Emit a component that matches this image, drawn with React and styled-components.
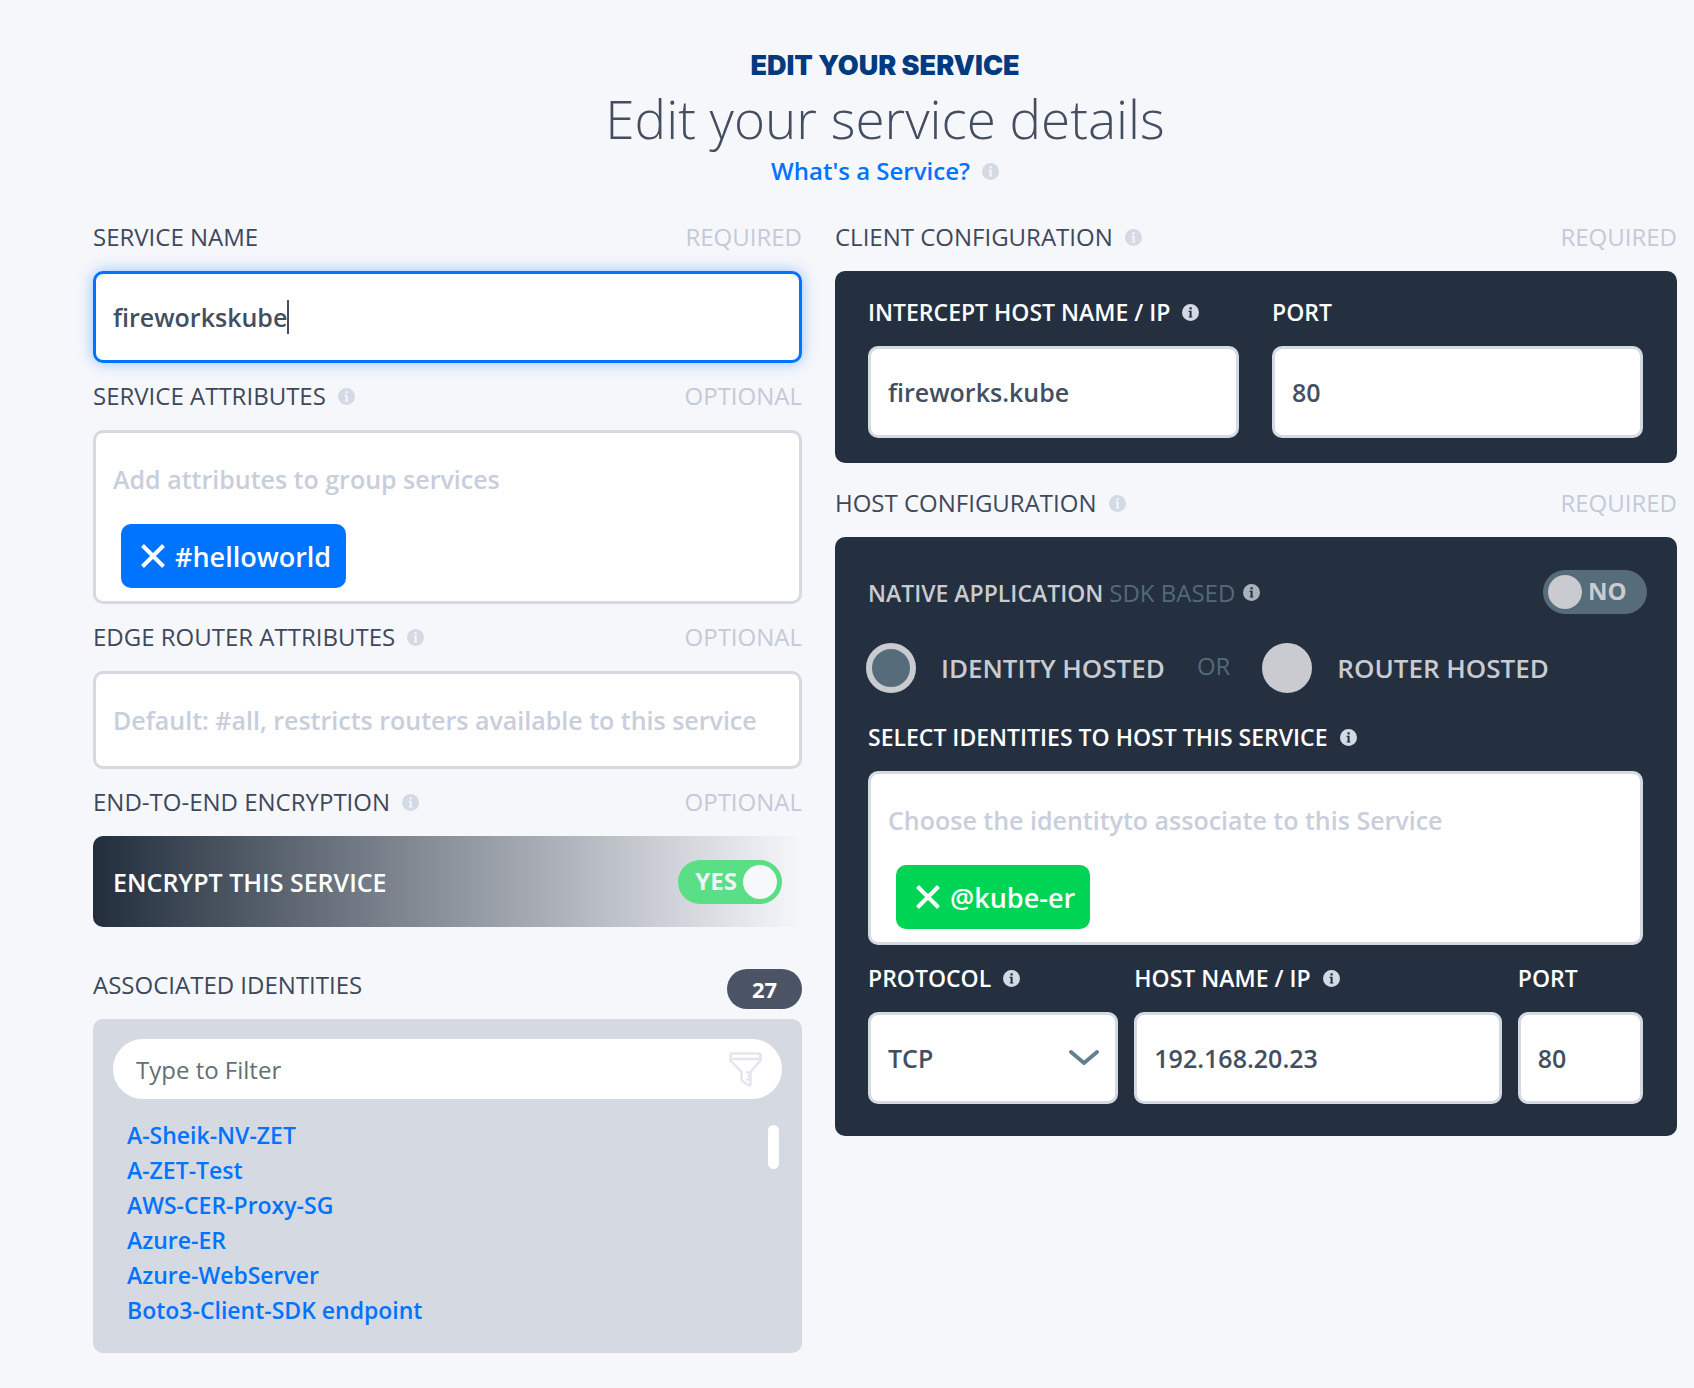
import React, { useState } from 'react'
import styled, { createGlobalStyle } from 'styled-components'

const identities = [
  'A-Sheik-NV-ZET',
  'A-ZET-Test',
  'AWS-CER-Proxy-SG',
  'Azure-ER',
  'Azure-WebServer',
  'Boto3-Client-SDK endpoint',
]

const CloseIcon = () => (
  <svg width="24" height="24" viewBox="0 0 24 24" fill="none" stroke="#ffffff" strokeWidth="4" aria-hidden="true">
    <path d="M1.5 1.5 22.5 22.5M22.5 1.5 1.5 22.5" />
  </svg>
)

const FunnelIcon = () => (
  <svg width="33" height="35" viewBox="0 0 33 35" fill="none" stroke="#e5e5ee" strokeWidth="2.5" strokeLinejoin="round" strokeLinecap="round" aria-hidden="true">
    <path d="M2.5 1.5h28a1 1 0 0 1 1 1v4.500h-30V2.500a1 1 0 0 1 1-1Z" />
    <path d="M1.500 8.500 12.500 20v8.500l7.500 5a1 1 0 0 0 1.500-1V20L31.500 8.500" />
    <path d="M18 20.500H21M19.500 24h1.500M18 27.500H21" />
  </svg>
)

const ChevronIcon = () => (
  <svg width="30" height="15" viewBox="0 0 30 15" fill="none" stroke="#64808f" strokeWidth="3.800" strokeLinecap="round" strokeLinejoin="round" aria-hidden="true">
    <path d="M2 2 15 13 28 2" />
  </svg>
)

const InfoIcon = ({ muted }) => (
  <InfoSvg $muted={muted} viewBox="0 0 17 17" aria-hidden="true">
    <path fillRule="evenodd" d="M8.500 0a8.500 8.500 0 1 1 0 17a8.500 8.500 0 0 1 0-17ZM7.500 3.300v2.200h2.200v-2.200ZM6.600 6.700v1.200h1v4.600h-.9v1h3.700v-1h-.8V6.700Z" />
  </InfoSvg>
)

function FieldLabel({ htmlFor, text, hint, note, dark }) {
  return (
    <LabelRow>
      <Label htmlFor={htmlFor} as={htmlFor ? 'label' : 'span'} $dark={dark}>{text}</Label>
      {hint && <InfoIcon />}
      {note && <Note>{note}</Note>}
    </LabelRow>
  )
}

function TagField({ id, placeholder, children }) {
  return (
    <TagBox>
      <TagInput id={id} type="text" placeholder={placeholder} />
      {children && <TagList>{children}</TagList>}
    </TagBox>
  )
}

function Toggle({ label, checked, onChange }) {
  return (
    <Switch type="button" role="switch" aria-checked={checked} aria-label={label} $on={checked} onClick={() => onChange(!checked)}>
      <span>{checked ? 'YES' : 'NO'}</span>
      <Knob $on={checked} />
    </Switch>
  )
}

function App() {
  const [name, setName] = useState('fireworkskube')
  const [encrypt, setEncrypt] = useState(true)
  const [native, setNative] = useState(false)
  const [hosting, setHosting] = useState('identity')

  return (
    <>
      <GlobalStyle />
      <Page>
        <Header>
          <Kicker>EDIT YOUR SERVICE</Kicker>
          <Title>Edit your service details</Title>
          <HelpRow>
            <a href="#service">What's a Service?</a>
            <InfoIcon />
          </HelpRow>
        </Header>

        <Columns>
          <div>
            <FieldLabel htmlFor="name" text="SERVICE NAME" note="REQUIRED" />
            <CaretField>
              <Input id="name" type="text" value={name} onChange={(e) => setName(e.target.value)} autoFocus />
              <CaretLine aria-hidden="true"><span>{name}</span></CaretLine>
            </CaretField>

            <FieldLabel htmlFor="attributes" text="SERVICE ATTRIBUTES" hint note="OPTIONAL" />
            <TagField id="attributes" placeholder="Add attributes to group services">
              <Tag type="button" $color="#0073ff"><CloseIcon />#helloworld</Tag>
            </TagField>

            <FieldLabel htmlFor="routers" text="EDGE ROUTER ATTRIBUTES" hint note="OPTIONAL" />
            <TagField id="routers" placeholder="Default: #all, restricts routers available to this service" />

            <FieldLabel text="END-TO-END ENCRYPTION" hint note="OPTIONAL" />
            <EncryptBar>
              ENCRYPT THIS SERVICE
              <Toggle label="Encrypt this service" checked={encrypt} onChange={setEncrypt} />
            </EncryptBar>

            <ListHeading>
              <h2>ASSOCIATED IDENTITIES</h2>
              <Count>27</Count>
            </ListHeading>
            <ListPanel>
              <FilterBox>
                <input type="text" placeholder="Type to Filter" aria-label="Type to Filter" />
                <FunnelIcon />
              </FilterBox>
              <ListBody>
                <IdentityList>
                  {identities.map((item) => (
                    <li key={item}><a href="#identity">{item}</a></li>
                  ))}
                </IdentityList>
                <ScrollThumb />
              </ListBody>
            </ListPanel>
          </div>

          <div>
            <FieldLabel text="CLIENT CONFIGURATION" hint note="REQUIRED" />
            <ClientPanel>
              <div>
                <FieldLabel htmlFor="intercept" text="INTERCEPT HOST NAME / IP" hint dark />
                <Input id="intercept" type="text" defaultValue="fireworks.kube" />
              </div>
              <div>
                <FieldLabel htmlFor="clientPort" text="PORT" dark />
                <Input id="clientPort" type="text" defaultValue="80" />
              </div>
            </ClientPanel>

            <HostSection>
              <FieldLabel text="HOST CONFIGURATION" hint note="REQUIRED" />
              <HostPanel>
                <NativeRow>
                  <NativeLabel>NATIVE APPLICATION <em>SDK BASED</em></NativeLabel>
                  <InfoIcon muted />
                  <Toggle label="Native application" checked={native} onChange={setNative} />
                </NativeRow>
                <RadioRow>
                  <RadioLabel>
                    <Radio type="radio" name="hosting" checked={hosting === 'identity'} onChange={() => setHosting('identity')} />
                    IDENTITY HOSTED
                  </RadioLabel>
                  <Or>OR</Or>
                  <RadioLabel>
                    <Radio type="radio" name="hosting" checked={hosting === 'router'} onChange={() => setHosting('router')} />
                    ROUTER HOSTED
                  </RadioLabel>
                </RadioRow>

                <FieldLabel htmlFor="hosts" text="SELECT IDENTITIES TO HOST THIS SERVICE" hint dark />
                <TagField id="hosts" placeholder="Choose the identityto associate to this Service">
                  <Tag type="button" $color="#00d455"><CloseIcon />@kube-er</Tag>
                </TagField>

                <HostFields>
                  <div>
                    <FieldLabel htmlFor="protocol" text="PROTOCOL" hint dark />
                    <SelectBox>
                      <Input as="select" id="protocol" defaultValue="TCP">
                        <option>TCP</option>
                        <option>UDP</option>
                      </Input>
                      <ChevronIcon />
                    </SelectBox>
                  </div>
                  <div>
                    <FieldLabel htmlFor="host" text="HOST NAME / IP" hint dark />
                    <Input id="host" type="text" defaultValue="192.168.20.23" />
                  </div>
                  <div>
                    <FieldLabel htmlFor="hostPort" text="PORT" dark />
                    <Input id="hostPort" type="text" defaultValue="80" />
                  </div>
                </HostFields>
              </HostPanel>
            </HostSection>
          </div>
        </Columns>
      </Page>
    </>
  )
}
export default App

const GlobalStyle = createGlobalStyle`
  * {
    box-sizing: border-box;
  }
  body {
    margin: 0;
    background: #f6f7fb;
    color: #434f61;
    font-family: "Open Sans", "Noto Sans", sans-serif;
    font-size: 24px;
  }
  input, select, button {
    font-family: inherit;
  }
  a {
    color: #0073ff;
    text-decoration: none;
  }
`
const Page = styled.main`
  padding: 48px 17px 35px 93px;
`
const Header = styled.header`
  display: flex;
  flex-direction: column;
  align-items: center;
  margin-bottom: 16px;
`
const Kicker = styled.div`
  font-family: Inter, sans-serif;
  font-size: 27px;
  font-weight: 900;
  line-height: 36px;
  color: #003a80;
`
const Title = styled.h1`
  margin: 0;
  font-size: 53px;
  font-weight: 300;
  line-height: 70px;
`
const HelpRow = styled.div`
  display: flex;
  align-items: center;
  gap: 12px;
  font-weight: 600;
  line-height: 34px;
`
const InfoSvg = styled.svg`
  flex: none;
  width: 17px;
  height: 17px;
  fill: ${(p) => (p.$muted ? '#a9b1bb' : '#d3dae4')};
`
const Columns = styled.div`
  display: grid;
  grid-template-columns: 709fr 842fr;
  gap: 33px;
  align-items: start;
`
const LabelRow = styled.div`
  display: flex;
  align-items: center;
  gap: 12px;
  padding: 15px 0 16px;
  line-height: 36px;
  white-space: nowrap;
`
const Label = styled.label`
  font-size: ${(p) => (p.$dark ? '23px' : '24px')};
  font-weight: ${(p) => (p.$dark ? 600 : 400)};
  color: ${(p) => (p.$dark ? '#ffffff' : '#3d495b')};
`
const Note = styled.span`
  margin-left: auto;
  color: #c3cad8;
`
const Input = styled.input`
  display: block;
  width: 100%;
  height: 92px;
  padding: 0 17px;
  border: 3px solid #d5d9e2;
  border-radius: 10px;
  background: #ffffff;
  color: #434f61;
  font-size: 25px;
  font-weight: 600;
  appearance: none;
  outline: none;
  &:focus {
    border-color: #0073ff;
    box-shadow: 0 0 15px rgba(0, 115, 255, 0.4);
  }
`
// repeats the typed value so that the caret sits right after it
const CaretLine = styled.div`
  display: none;
  position: absolute;
  inset: 0;
  align-items: center;
  padding: 0 20px;
  overflow: hidden;
  color: transparent;
  font-size: 25px;
  font-weight: 600;
  line-height: 34px;
  white-space: pre;
  pointer-events: none;
  span {
    border-right: 2px solid #434f61;
  }
`
const CaretField = styled.div`
  position: relative;
  input {
    caret-color: transparent;
  }
  input:focus + ${CaretLine} {
    display: flex;
  }
`
const TagBox = styled.div`
  padding-bottom: 1px;
  border: 3px solid #d5d9e2;
  border-radius: 10px;
  background: #ffffff;
`
const TagInput = styled.input`
  display: block;
  width: 100%;
  height: 91px;
  padding: 0 17px;
  border: none;
  background: none;
  color: #434f61;
  font-size: 25px;
  font-weight: 600;
  outline: none;
  &::placeholder {
    color: #c8cedb;
  }
`
const TagList = styled.div`
  display: flex;
  gap: 10px;
  padding: 0 25px 12px;
`
const Tag = styled.button`
  display: flex;
  align-items: center;
  gap: 10px;
  height: 64px;
  padding: 0 15px 0 20px;
  border: none;
  border-radius: 10px;
  background: ${(p) => p.$color};
  color: #ffffff;
  font-size: 27px;
  font-weight: 600;
  cursor: pointer;
`
const EncryptBar = styled.div`
  display: flex;
  align-items: center;
  justify-content: space-between;
  height: 91px;
  padding: 0 20px;
  border-radius: 10px;
  background: linear-gradient(90deg, #222e3d, #f6f7fb);
  color: #ffffff;
  font-size: 25px;
  font-weight: 600;
`
const Switch = styled.button`
  display: flex;
  flex: none;
  flex-direction: ${(p) => (p.$on ? 'row' : 'row-reverse')};
  align-items: center;
  justify-content: flex-end;
  gap: 6px;
  width: 104px;
  height: 44px;
  padding: 0 5px;
  border: none;
  border-radius: 22px;
  background: ${(p) => (p.$on ? '#5adf86' : '#566c7b')};
  color: ${(p) => (p.$on ? '#f0f4f5' : '#c9cbd0')};
  font-size: 24px;
  font-weight: 700;
  line-height: 40px;
  cursor: pointer;
  span {
    padding-bottom: 2px;
  }
`
const Knob = styled.i`
  width: 34px;
  height: 34px;
  border-radius: 50%;
  background: ${(p) => (p.$on ? '#f6f8fa' : '#c9cbd0')};
`
const ListHeading = styled.div`
  display: flex;
  align-items: flex-start;
  justify-content: space-between;
  padding: 42px 0 10px;
  h2 {
    margin: 0;
    color: #3d495b;
    font-size: 24px;
    font-weight: 400;
    line-height: 32px;
  }
`
const Count = styled.span`
  width: 75px;
  border-radius: 20px;
  background: #4b5465;
  color: #ffffff;
  font-size: 22px;
  font-weight: 700;
  line-height: 40px;
  text-align: center;
`
const ListPanel = styled.section`
  padding: 20px 20px 25px;
  border-radius: 10px;
  background: #d5d9e2;
`
const FilterBox = styled.div`
  display: flex;
  align-items: center;
  height: 60px;
  padding: 0 20px 0 23px;
  border-radius: 30px;
  background: #ffffff;
  input {
    flex: 1;
    min-width: 0;
    padding: 0;
    border: none;
    background: none;
    font-size: 24px;
    outline: none;
  }
  input::placeholder {
    color: #636f74;
  }
`
const ListBody = styled.div`
  display: flex;
  justify-content: space-between;
  padding: 19px 3px 0 14px;
`
const IdentityList = styled.ul`
  margin: 0;
  padding: 0;
  list-style: none;
  font-size: 23px;
  font-weight: 600;
  line-height: 35px;
`
const ScrollThumb = styled.div`
  width: 11px;
  height: 44px;
  margin-top: 7px;
  border-radius: 6px;
  background: #ffffff;
`
const ClientPanel = styled.section`
  display: grid;
  grid-template-columns: 1fr 1fr;
  gap: 33px;
  padding: 8px 34px 25px 33px;
  border-radius: 10px;
  background: #242f3f;
`
const HostSection = styled.section`
  margin-top: 7px;
`
const HostPanel = styled.div`
  padding: 33px 34px 32px 33px;
  border-radius: 10px;
  background: #242f3f;
`
const NativeRow = styled.div`
  display: flex;
  align-items: center;
  gap: 8px;
  margin-right: -4px;
  button {
    margin-left: auto;
  }
`
const NativeLabel = styled.span`
  color: #c9cbd0;
  font-size: 23px;
  font-weight: 600;
  em {
    color: #526a7a;
    font-size: 24px;
    font-style: normal;
    font-weight: 400;
  }
`
const RadioRow = styled.div`
  display: flex;
  align-items: center;
  gap: 32px;
  margin: 29px 0 11px -2px;
`
const RadioLabel = styled.label`
  display: flex;
  align-items: center;
  gap: 25px;
  color: #c9cbd0;
  font-size: 26px;
  font-weight: 600;
  cursor: pointer;
`
const Radio = styled.input`
  width: 50px;
  height: 50px;
  margin: 0;
  border: 6px solid #c9cbd0;
  border-radius: 50%;
  background: #c9cbd0;
  appearance: none;
  &:checked {
    background: #566c7b;
  }
`
const Or = styled.span`
  padding-bottom: 6px;
  color: #526a7a;
`
const HostFields = styled.div`
  display: grid;
  grid-template-columns: 250fr 367fr 125fr;
  gap: 16px;
`
const SelectBox = styled.div`
  position: relative;
  svg {
    position: absolute;
    top: 38px;
    right: 19px;
    pointer-events: none;
  }
`
